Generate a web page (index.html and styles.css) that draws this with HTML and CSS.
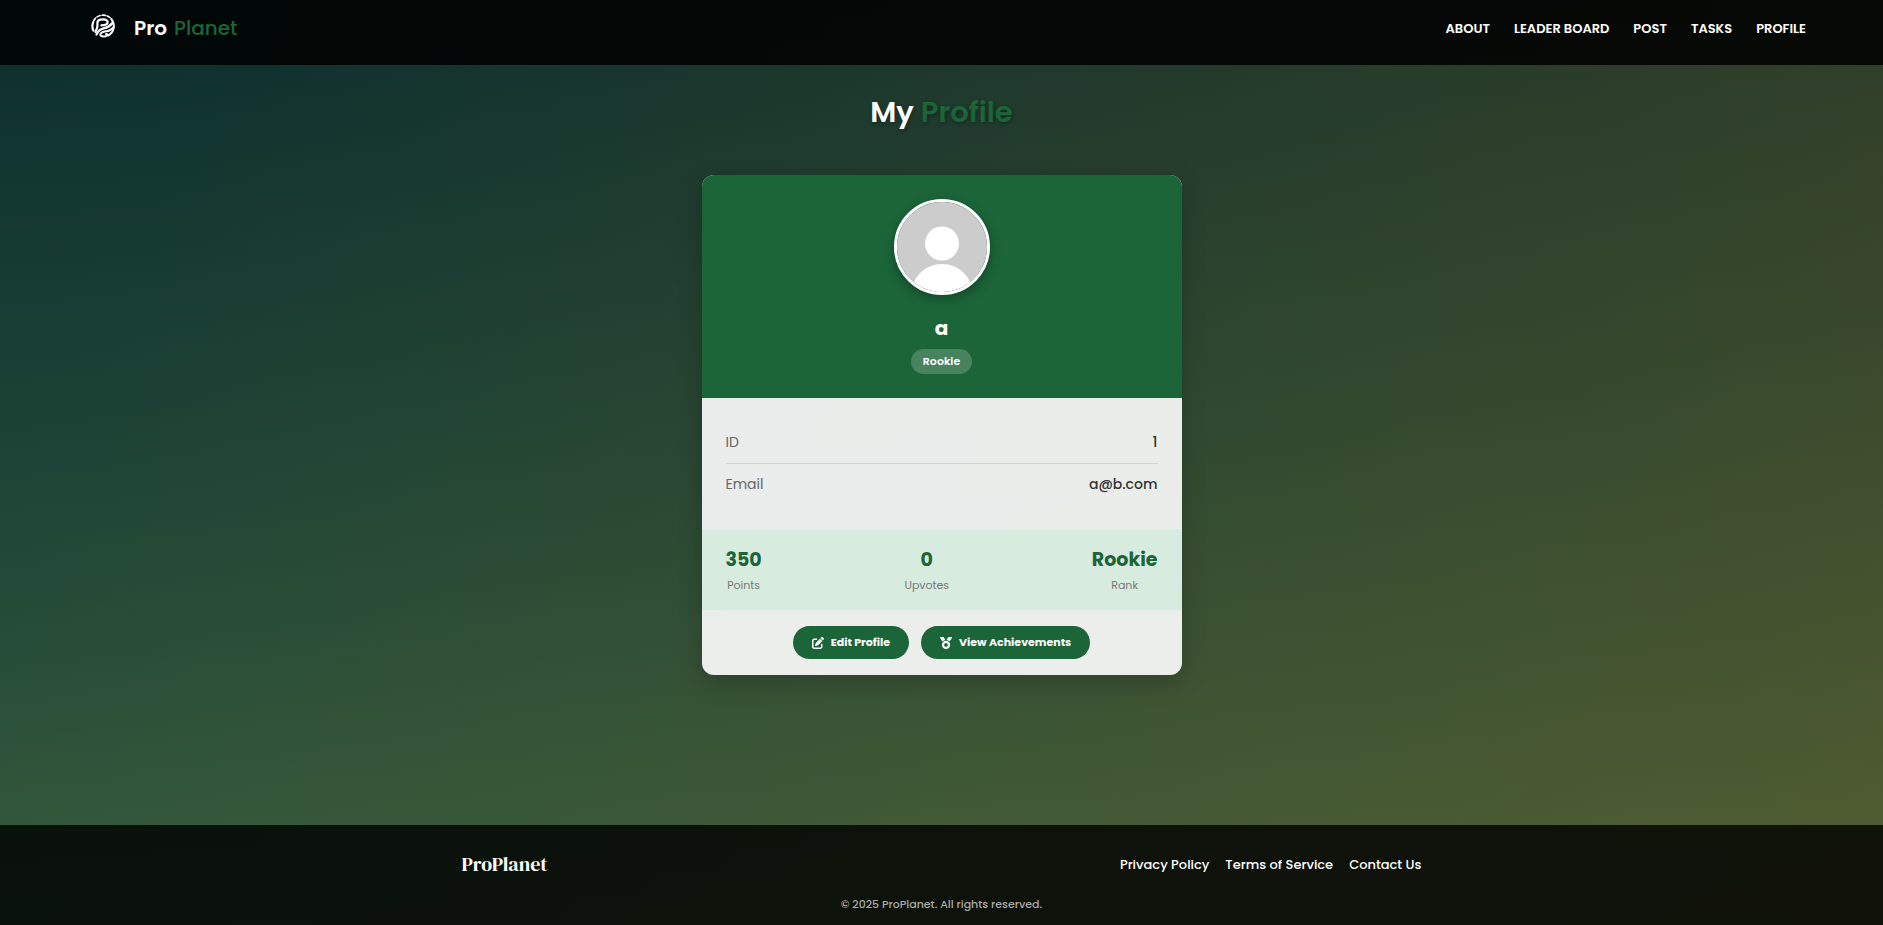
FILE: index.html
```html
<!DOCTYPE html>
<html lang="en">
<head>
<meta charset="utf-8">
<title>My Profile - ProPlanet</title>
<link rel="stylesheet" href="styles.css">
</head>
<body>
<header class="navbar">
  <a class="brand" href="#">
    <svg class="brand-logo" viewBox="0 0 24 24" aria-hidden="true">
      <g fill="none" stroke="#fff" stroke-linecap="round" stroke-linejoin="round">
        <path stroke-width="2.2" d="M2.4 16.6A10.6 10.6 0 0 1 2.2 8.2"/>
        <path stroke-width="1.6" stroke-dasharray="3.4 1.8" d="M2.6 6.8A10.8 10.8 0 0 1 20.4 5"/>
        <path stroke-width="2" d="M20.6 5.4A10.8 10.8 0 0 1 17.4 21.4"/>
        <path stroke-width="2.2" d="M4.4 18C5.6 15 6.2 14.400 6.4 12V8.600C6.600 6.2 8.8 5.4 12 5.4C15.4 5.4 17 6.8 16.6 8.8C16.2 11 14 11.4 10.4 11.4"/>
        <path stroke-width="2.400" d="M5.600 20.4C7.2 16.6 9 15.200 12.6 14.4C16.6 13.6 19 12.4 21.6 8.8"/>
        <path stroke-width="2" d="M22.4 13.4C19.6 16.800 17.6 17 13.6 17.6C10.4 18.2 9 19.6 9.4 21.2C10.2 23 14.6 23 16 21.6C16.800 20.800 16.8 20 15 20"/>
      </g>
    </svg>
    <span class="brand-name">Pro</span>
    <span class="brand-accent">Planet</span>
  </a>
  <nav class="nav-links">
    <a href="#">ABOUT</a>
    <a href="#">LEADER BOARD</a>
    <a href="#">POST</a>
    <a href="#">TASKS</a>
    <a href="#">PROFILE</a>
  </nav>
</header>

<main class="page">
  <h1 class="page-title">My <span class="title-accent">Profile</span></h1>
  <section class="card">
    <div class="card-header">
      <svg class="avatar" viewBox="0 0 90 90" role="img" aria-label="Profile picture">
        <rect width="90" height="90" fill="#ccc"/>
        <circle cx="45" cy="41.5" r="17" fill="#fff"/>
        <circle cx="45" cy="93" r="31" fill="#fff"/>
      </svg>
      <h2 class="user-name">a</h2>
      <span class="badge">Rookie</span>
    </div>
    <dl class="details">
      <div class="detail-row"><dt>ID</dt><dd>1</dd></div>
      <div class="detail-row"><dt>Email</dt><dd>a@b.com</dd></div>
    </dl>
    <div class="stats">
      <div class="stat"><span class="stat-value">350</span><span class="stat-label">Points</span></div>
      <div class="stat"><span class="stat-value">0</span><span class="stat-label">Upvotes</span></div>
      <div class="stat"><span class="stat-value">Rookie</span><span class="stat-label">Rank</span></div>
    </div>
    <div class="actions">
      <button class="btn" type="button">
        <svg class="btn-icon" viewBox="0 0 512 512" aria-hidden="true"><path fill="currentColor" d="M471.6 21.7c-21.9-21.9-57.3-21.9-79.2 0L362.3 51.7l97.9 97.9 30.1-30.1c21.9-21.9 21.9-57.3 0-79.2L471.6 21.7zm-299.2 220c-6.1 6.1-10.8 13.6-13.5 21.9l-29.6 88.8c-2.9 8.6-.6 18.1 5.8 24.6s15.9 8.7 24.6 5.8l88.8-29.6c8.2-2.7 15.7-7.4 21.9-13.5L437.7 172.3 339.7 74.3 172.4 241.7zM96 64C43 64 0 107 0 160V416c0 53 43 96 96 96H352c53 0 96-43 96-96V320c0-17.7-14.3-32-32-32s-32 14.3-32 32v96c0 17.7-14.3 32-32 32H96c-17.7 0-32-14.3-32-32V160c0-17.7 14.3-32 32-32h96c17.7 0 32-14.3 32-32s-14.3-32-32-32H96z"/></svg>
        Edit Profile
      </button>
      <button class="btn" type="button">
        <svg class="btn-icon" viewBox="0 0 512 512" aria-hidden="true"><path fill="currentColor" fill-rule="evenodd" d="M4.1 38.2C1.4 34.2 0 29.4 0 24.6C0 11 11 0 24.6 0H133.9c11.2 0 21.7 5.900 27.4 15.5l68.5 114.1c-48.2 6.1-91.3 28.6-123.4 61.9L4.1 38.2zm503.7 0L405.6 191.5c-32.1-33.3-75.2-55.8-123.4-61.9L350.7 15.5C356.5 5.9 366.9 0 378.1 0H487.4C501 0 512 11 512 24.6c0 4.8-1.4 9.6-4.1 13.6zM80 336a176 176 0 1 1 352 0A176 176 0 1 1 80 336zm96 0a80 80 0 1 0 160 0a80 80 0 1 0-160 0z"/></svg>
        View Achievements
      </button>
    </div>
  </section>
</main>

<footer class="footer">
  <div class="footer-row">
    <span class="footer-brand">ProPlanet</span>
    <nav class="footer-links">
      <a href="#">Privacy Policy</a>
      <a href="#">Terms of Service</a>
      <a href="#">Contact Us</a>
    </nav>
  </div>
  <p class="copyright">© 2025 ProPlanet. All rights reserved.</p>
</footer>
</body>
</html>
```

FILE: styles.css
```css
* {
  box-sizing: border-box;
}

body {
  margin: 0;
  min-height: 100vh;
  display: flex;
  flex-direction: column;
  font-family: Poppins, Inter, "Open Sans", sans-serif;
  color: #fff;
  background:
    linear-gradient(110deg, rgba(135, 86, 18, 0) 10%, rgba(135, 86, 18, 0.3) 100%),
    linear-gradient(176deg, #0d302e 4%, #1f4637 48%, #385e3e 92%, #3c6240 100%);
}

a {
  color: inherit;
  text-decoration: none;
}

.navbar {
  display: flex;
  justify-content: space-between;
  padding: 14px 77px 0 91px;
  height: 65px;
  background: rgba(0, 0, 0, 0.85);
}

.brand {
  display: flex;
  align-items: center;
  height: 28px;
  font-size: 20px;
}

.brand-logo {
  align-self: flex-start;
  width: 24px;
  height: 24px;
  margin-right: 19px;
}

.brand-name {
  font-weight: 600;
  margin-right: 7px;
}

.brand-accent {
  font-weight: 500;
  color: #1b6539;
}

.nav-links {
  display: flex;
  align-items: center;
  gap: 24px;
  height: 30px;
  font-size: 13px;
  font-weight: 600;
}

.page {
  flex: 1;
  display: flex;
  flex-direction: column;
  align-items: center;
  padding: 24px 16px;
}

.page-title {
  margin: 0 0 40px;
  font-size: 29px;
  line-height: 46px;
  font-weight: 600;
  text-shadow: 1px 2px 4px rgba(0, 0, 0, 0.3);
}

.title-accent {
  color: #1b6539;
}

.card {
  width: 100%;
  max-width: 480px;
  border-radius: 12px;
  overflow: hidden;
  background: rgba(255, 255, 255, 0.9);
  box-shadow: 0 8px 24px rgba(0, 0, 0, 0.2);
}

.card-header {
  display: flex;
  flex-direction: column;
  align-items: center;
  padding: 24px;
  background: #1b6539;
}

.avatar {
  width: 96px;
  height: 96px;
  border: 3px solid #fff;
  border-radius: 50%;
  box-shadow: 0 4px 12px rgba(0, 0, 0, 0.3);
}

.user-name {
  margin: 18px 0 6px;
  font-size: 20px;
  line-height: 30px;
  font-weight: 700;
}

.badge {
  padding: 0 12px;
  border-radius: 16px;
  font-size: 11px;
  line-height: 25px;
  font-weight: 600;
  background: rgba(255, 255, 255, 0.2);
}

.details {
  margin: 0;
  padding: 24px;
  font-size: 14px;
  line-height: 41px;
}

.detail-row {
  display: flex;
  justify-content: space-between;
}

.detail-row + .detail-row {
  border-top: 1px solid #d2d4d3;
}

.detail-row dt {
  color: #666;
}

.detail-row dd {
  margin: 0;
  font-weight: 500;
  color: #333;
}

.stats {
  display: flex;
  justify-content: space-between;
  padding: 16px 24px 15px;
  background: #d7ebdf;
}

.stat {
  display: flex;
  flex-direction: column;
  align-items: center;
}

.stat-value {
  font-size: 19px;
  line-height: 30px;
  font-weight: 700;
  color: #1b6539;
}

.stat-label {
  font-size: 11px;
  line-height: 20px;
  color: #777;
}

.actions {
  display: flex;
  justify-content: center;
  gap: 12px;
  padding: 16px;
}

.btn {
  display: flex;
  align-items: center;
  gap: 7px;
  height: 33px;
  padding: 0 19px;
  border: 0;
  border-radius: 17px;
  font: inherit;
  font-size: 11px;
  font-weight: 700;
  color: #fff;
  background: #1b6539;
  cursor: pointer;
}

.btn-icon {
  width: 12px;
  height: 12px;
}

.footer {
  padding: 24px 16px 12px;
  background: rgba(0, 0, 0, 0.8);
}

.footer-row {
  display: flex;
  align-items: center;
  justify-content: space-between;
  max-width: 960px;
  margin: 0 auto 16px;
  line-height: 31px;
}

.footer-brand {
  font-family: "DM Serif Display", "Liberation Serif", serif;
  font-size: 20px;
  font-weight: 400;
}

.footer-links {
  display: flex;
  gap: 16px;
  font-size: 13px;
  font-weight: 500;
}

.copyright {
  margin: 0;
  font-size: 11px;
  line-height: 17px;
  font-weight: 500;
  text-align: center;
  color: #aaa;
}
```
